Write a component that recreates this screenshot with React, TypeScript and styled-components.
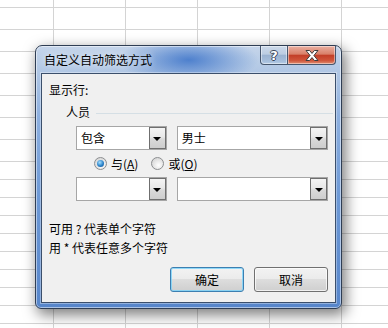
import React from 'react'
import styled, { createGlobalStyle } from 'styled-components'

const GlobalStyle = createGlobalStyle`
  html, body {
    margin: 0;
    padding: 0;
    background: #fff;
  }
  body {
    font-family: "Noto Sans CJK SC", "Noto Sans", sans-serif;
    font-size: 12px;
    color: #000;
  }
`

const Screen = styled.div`
  position: relative;
  width: 388px;
  height: 328px;
  overflow: hidden;
  background: #fff;
`

const Sheet = styled.div`
  display: grid;
  grid-template-columns: 54px repeat(5, 72px);
  grid-template-rows: 8px repeat(7, 22px) repeat(10, 18px);
`

const Cell = styled.div`
  border-right: 1px solid #d4d4d4;
  border-bottom: 1px solid #d4d4d4;
`

const Dialog = styled.div`
  position: absolute;
  left: 35px;
  top: 45px;
  width: 307px;
  height: 264px;
  box-sizing: border-box;
  display: flex;
  flex-direction: column;
  padding: 0 5px 5px;
  border: 1px solid #2f3e54;
  border-radius: 7px 7px 6px 6px;
  background:
    radial-gradient(ellipse 70px 24px at 50% 14px, rgba(72, 124, 204, 0.95), rgba(72, 124, 204, 0)),
    linear-gradient(to bottom, #c5d5ea 0px, #afc6e4 28px, #8eb0df 70px, #6d99d6 150px, #5786cb 262px);
  box-shadow:
    inset 0 0 0 1px rgba(255, 255, 255, 0.5),
    3px 5px 14px 1px rgba(0, 0, 0, 0.5);
`

const TitleBar = styled.div`
  height: 27px;
  display: flex;
  align-items: flex-start;
`

const Title = styled.span`
  padding: 6px 0 0 3px;
  font-size: 12px;
  line-height: 16px;
  text-shadow: 0 0 6px rgba(255, 255, 255, 0.9);
`

const CaptionButtons = styled.div`
  display: flex;
  margin-left: auto;
`

const CaptionButton = styled.div<{ $close?: boolean }>`
  box-sizing: border-box;
  width: ${p => (p.$close ? 48 : 28)}px;
  height: 19px;
  display: flex;
  align-items: center;
  justify-content: center;
  border: 1px solid #46566d;
  border-top: none;
  border-left: ${p => (p.$close ? 'none' : '1px solid #46566d')};
  border-radius: ${p => (p.$close ? '0 0 4px 0' : '0 0 0 4px')};
  background: ${p =>
    p.$close
      ? 'linear-gradient(#eab0a2, #d98069 45%, #c33f28 52%, #cf553a 80%, #df8e72)'
      : 'linear-gradient(#cddaea, #bccde2 45%, #9bb3d1 52%, #a7bfdc 85%, #b8cde6)'};
  box-shadow: inset 0 0 0 1px rgba(255, 255, 255, 0.45);
`

const HelpGlyph = styled.span`
  font-family: "DejaVu Sans", sans-serif;
  font-weight: bold;
  font-size: 13px;
  line-height: 13px;
  color: #fff;
  text-shadow:
    1px 0 0 #3a475a, -1px 0 0 #3a475a, 0 1px 0 #3a475a, 0 -1px 0 #3a475a;
`

const Client = styled.div`
  flex: 1;
  display: flex;
  flex-direction: column;
  padding: 0 7px;
  border: 1px solid #3b4f6b;
  background: #f0f0f0;
  box-shadow: 0 0 0 1px rgba(255, 255, 255, 0.35);
`

const Label = styled.div<{ $top: number }>`
  margin-top: ${p => p.$top}px;
  line-height: 16px;
`

const GroupHeader = styled.div`
  display: flex;
  align-items: center;
  gap: 6px;
  margin: 6px -5px 0 17px;
  line-height: 16px;
`

const GroupLine = styled.div`
  flex: 1;
  height: 1px;
  margin-top: 2px;
  background: #d5dfe5;
`

const ComboRow = styled.div<{ $top: number }>`
  display: flex;
  gap: 10px;
  margin: ${p => p.$top}px 0 0 27px;
`

const Combo = styled.div<{ $w: number }>`
  box-sizing: border-box;
  width: ${p => p.$w}px;
  height: 24px;
  display: flex;
  align-items: stretch;
  border: 1px solid #a6a6a6;
  background: #fff;
`

const ComboText = styled.span`
  flex: 1;
  padding-left: 4px;
  line-height: 22px;
`

const DropButton = styled.div`
  box-sizing: border-box;
  width: 17px;
  display: flex;
  align-items: center;
  justify-content: center;
  border: 1px solid #6f6f6f;
  background: linear-gradient(#f4f4f4, #e8e8e8 45%, #d9d9d9 55%, #cdcdcd);
`

const Arrow = styled.span`
  width: 0;
  height: 0;
  margin-top: 1px;
  border-left: 4px solid transparent;
  border-right: 4px solid transparent;
  border-top: 4px solid #000;
`

const RadioRow = styled.div`
  height: 27px;
  display: flex;
  align-items: center;
  margin-left: 45px;
`

const RadioItem = styled.label`
  display: flex;
  align-items: center;
  gap: 4px;
  margin-right: 13px;
  line-height: 16px;
`

const RadioCircle = styled.span<{ $checked?: boolean }>`
  box-sizing: border-box;
  width: 13px;
  height: 13px;
  border-radius: 50%;
  display: flex;
  align-items: center;
  justify-content: center;
  border: 1px solid #8c8e90;
  background: radial-gradient(circle at 60% 65%, #ffffff, #d6d6d6 80%);

  &::after {
    content: '';
    display: ${p => (p.$checked ? 'block' : 'none')};
    width: 7px;
    height: 7px;
    border-radius: 50%;
    background: radial-gradient(circle at 40% 35%, #a6e0ff, #2a82c9 55%, #0f4a86);
  }
`

const Hints = styled.div`
  display: flex;
  flex-direction: column;
  gap: 3px;
  margin-top: 20px;
  line-height: 16px;
`

const Footer = styled.div`
  display: flex;
  justify-content: flex-end;
  gap: 10px;
  margin-top: 11px;
`

const PushButton = styled.button<{ $default?: boolean }>`
  width: 74px;
  height: 25px;
  padding: 0;
  border: 1px solid ${p => (p.$default ? '#3c7fb1' : '#707070')};
  border-radius: 3px;
  background: linear-gradient(#f2f2f2, #ebebeb 50%, #dddddd 50%, #cfcfcf);
  box-shadow: inset 0 0 0 1px ${p => (p.$default ? 'rgba(120, 210, 250, 0.8)' : 'rgba(255, 255, 255, 0.7)')};
  font-family: "Noto Sans CJK SC", "Noto Sans", sans-serif;
  font-size: 12px;
  line-height: 16px;
  color: #000;
`

const CloseIcon = () => (
  <svg width="14" height="11" viewBox="0 0 14 11">
    <polygon
      points="1,0.5 4.6,0.5 7,3.4 9.4,0.5 13,0.5 8.9,5.5 13,10.5 9.4,10.5 7,7.6 4.6,10.5 1,10.5 5.1,5.5"
      fill="#fff"
      stroke="#3d3d3d"
      strokeWidth="1"
      strokeLinejoin="round"
    />
  </svg>
)

const DropDown = ({ width, value }: { width: number; value?: string }) => (
  <Combo $w={width}>
    <ComboText>{value}</ComboText>
    <DropButton>
      <Arrow />
    </DropButton>
  </Combo>
)

const App = () => {
  return (
    <Screen>
      <GlobalStyle />
      <Sheet>
        {Array.from({ length: 108 }).map((_, i) => (
          <Cell key={i} />
        ))}
      </Sheet>
      <Dialog>
        <TitleBar>
          <Title>自定义自动筛选方式</Title>
          <CaptionButtons>
            <CaptionButton>
              <HelpGlyph>?</HelpGlyph>
            </CaptionButton>
            <CaptionButton $close>
              <CloseIcon />
            </CaptionButton>
          </CaptionButtons>
        </TitleBar>
        <Client>
          <Label $top={8}>显示行:</Label>
          <GroupHeader>
            <span>人员</span>
            <GroupLine />
          </GroupHeader>
          <ComboRow $top={6}>
            <DropDown width={91} value="包含" />
            <DropDown width={152} value="男士" />
          </ComboRow>
          <RadioRow>
            <RadioItem>
              <RadioCircle $checked />
              <span>与(<u>A</u>)</span>
            </RadioItem>
            <RadioItem>
              <RadioCircle />
              <span>或(<u>O</u>)</span>
            </RadioItem>
          </RadioRow>
          <ComboRow $top={0}>
            <DropDown width={91} />
            <DropDown width={152} />
          </ComboRow>
          <Hints>
            <span>可用 ? 代表单个字符</span>
            <span>用 * 代表任意多个字符</span>
          </Hints>
          <Footer>
            <PushButton $default>确定</PushButton>
            <PushButton>取消</PushButton>
          </Footer>
        </Client>
      </Dialog>
    </Screen>
  )
}

export default App
